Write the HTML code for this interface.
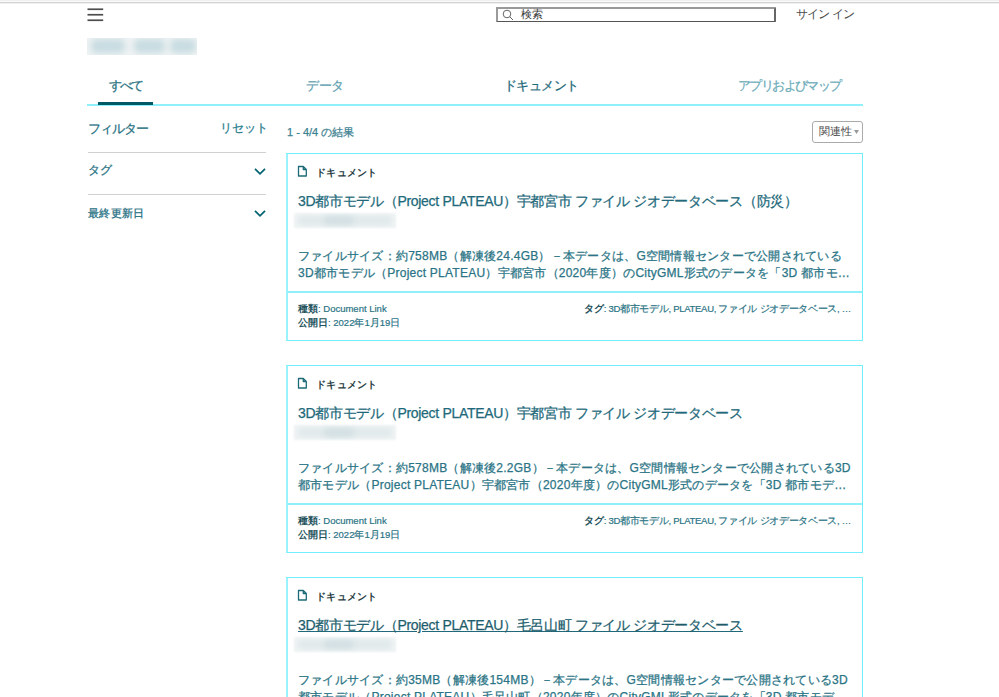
<!DOCTYPE html>
<html><head><meta charset="utf-8">
<style>
html,body{margin:0;padding:0;background:#fff;}
body{width:999px;height:697px;overflow:hidden;position:relative;font-family:"Liberation Sans",sans-serif;}
.a{position:absolute;white-space:nowrap;line-height:1;}
.s{-webkit-text-stroke-width:0.25px;}
.topl{position:absolute;left:0;width:999px;height:1px;}
.ham{position:absolute;left:88px;width:16px;height:2px;background:#4a4a4a;}
.blur{position:absolute;background:#eff3f4;overflow:hidden;}
.blob{position:absolute;background:#d3e1e5;border-radius:5px;filter:blur(2.5px);}
.tab{position:absolute;top:80px;font-size:12.5px;line-height:13px;}
.hr{position:absolute;left:88px;width:178px;height:1px;background:#d0d0d0;}
.chev{position:absolute;left:254px;width:12px;height:9px;}
.card{position:absolute;left:286px;width:574px;height:186px;border:1px solid #72eefc;border-left:2px solid #9af3fc;}
.card .ic{position:absolute;left:9px;top:11px;}
.card .kind{position:absolute;left:28px;top:14px;letter-spacing:0.3px;font-size:10px;font-weight:bold;color:#263c42;}
.card .title{position:absolute;left:10px;top:40px;font-size:14px;letter-spacing:-0.31px;color:#21697a;-webkit-text-stroke:0.25px #21697a;}
.card .sub{position:absolute;left:6px;top:59px;width:102px;height:15px;overflow:hidden;background:#eff3f4;filter:blur(0.8px);}
.card .desc{position:absolute;left:10px;top:94px;letter-spacing:0.24px;font-size:12px;line-height:17px;color:#2a7485;white-space:nowrap;-webkit-text-stroke:0.25px #2a7485;}
.card .div{position:absolute;left:0;top:137px;width:574px;height:2px;background:#8ff0fa;}
.card .f1{position:absolute;left:10px;top:148px;font-size:9.5px;line-height:13.5px;color:#2a7485;-webkit-text-stroke:0.2px #2a7485;}
.card .f1 b{color:#24535d;-webkit-text-stroke:0;}
.card .f2{position:absolute;right:11px;letter-spacing:-0.3px;top:148px;font-size:9.5px;line-height:13.5px;color:#2a7485;-webkit-text-stroke:0.2px #2a7485;}
.card .f2 b{color:#24535d;-webkit-text-stroke:0;}
</style></head>
<body>
<div class="topl" style="top:0;background:#f0f0f0"></div>
<div class="topl" style="top:1px;background:#fafafa"></div>
<div class="topl" style="top:2px;background:#d3d3d3"></div>
<div class="topl" style="top:3px;background:#efefef"></div>

<svg style="position:absolute;left:0;top:0" width="120" height="30"><g stroke="#4d4d4d" stroke-width="1.7"><line x1="87.5" y1="9.25" x2="103.2" y2="9.25"/><line x1="87.5" y1="14.75" x2="103.2" y2="14.75"/><line x1="87.5" y1="20.25" x2="103.2" y2="20.25"/></g></svg>

<div style="position:absolute;left:496px;top:7px;width:276px;height:12px;border:2px solid #9a9a9a;border-bottom:1px solid #555;border-right:2px solid #666;border-radius:1px;"></div>
<svg style="position:absolute;left:502px;top:9px" width="13" height="13" viewBox="0 0 13 13"><circle cx="5" cy="5" r="3.8" fill="none" stroke="#666" stroke-width="1"/><line x1="7.8" y1="7.8" x2="11" y2="11" stroke="#666" stroke-width="1"/></svg>
<div class="a" style="left:521px;top:9px;font-size:11px;color:#333">検索</div>
<div class="a" style="left:796px;top:9px;font-size:11.5px;letter-spacing:-0.8px;color:#4a4a4a">サイン イン</div>

<div class="blur" style="left:87px;top:38px;width:110px;height:17px;filter:blur(0.6px)">
  <div class="blob" style="left:4px;top:1px;width:34px;height:14px;background:#c8dce1;filter:blur(3px)"></div>
  <div class="blob" style="left:47px;top:1px;width:31px;height:14px;background:#c8dce1;filter:blur(3px)"></div>
  <div class="blob" style="left:83px;top:1px;width:26px;height:14px;background:#c8dce1;filter:blur(3px)"></div>
</div>

<div class="tab s" style="left:109px;letter-spacing:-2px;color:#2a7283">すべて</div>
<div class="tab s" style="left:306px;letter-spacing:-0.5px;color:#5fa2b0">データ</div>
<div class="tab s" style="left:504px;letter-spacing:-0.6px;color:#1f6a7b">ドキュメント</div>
<div class="tab s" style="left:738px;letter-spacing:-1.6px;color:#6dacb9">アプリおよびマップ</div>
<div style="position:absolute;left:87px;top:104px;width:776px;height:2px;background:#8ff0fa"></div>
<div style="position:absolute;left:98px;top:102px;width:55px;height:3px;background:#005a66"></div>

<div class="a s" style="left:88px;top:123px;font-size:12.5px;letter-spacing:-1px;color:#1f6f82">フィルター</div>
<div class="a s" style="left:219.5px;top:122px;font-size:12px;letter-spacing:0.3px;color:#2a7d8e">リセット</div>
<div class="hr" style="top:152px"></div>
<div class="a s" style="left:88px;top:164px;font-size:12px;color:#1f6f82">タグ</div>
<svg class="chev" style="top:167px" viewBox="0 0 12 9"><polyline points="1,1.8 6,6.8 11,1.8" fill="none" stroke="#00626f" stroke-width="1.7"/></svg>
<div class="hr" style="top:194px"></div>
<div class="a s" style="left:88px;top:208px;font-size:11px;letter-spacing:0.25px;color:#1f6f82">最終更新日</div>
<svg class="chev" style="top:209px" viewBox="0 0 12 9"><polyline points="1,1.8 6,6.8 11,1.8" fill="none" stroke="#00626f" stroke-width="1.7"/></svg>

<div class="a s" style="left:287px;top:127px;font-size:11px;color:#3c8191">1 - 4/4 の結果</div>
<div style="position:absolute;left:812px;top:121px;width:49px;height:20px;border:1px solid #aaa;border-radius:3px;"></div>
<div class="a" style="left:819px;top:126px;font-size:11px;color:#444">関連性</div>
<svg style="position:absolute;left:854px;top:130px" width="5" height="4" viewBox="0 0 5 4"><polygon points="0,0 5,0 2.5,4" fill="#999"/></svg>

<div class="card" style="top:153px"><svg class="ic" width="11" height="13" viewBox="0 0 11 13"><path d="M1.5 1.5 H6.3 L9.3 4.5 V11 H1.5 Z M6.3 1.5 V4.5 H9.3" fill="none" stroke="#1e6b78" stroke-width="1.3" stroke-linejoin="round"/></svg><div class="a kind">ドキュメント</div><div class="a title">3D都市モデル（Project PLATEAU）宇都宮市 ファイル ジオデータベース（防災）</div><div class="sub"><div class="blob" style="left:4px;top:3px;width:94px;height:9px;background:#e0e9eb"></div><div class="blob" style="left:30px;top:3px;width:30px;height:9px;background:#d3e0e3"></div></div><div class="desc">ファイルサイズ：約758MB（解凍後24.4GB）－本データは、G空間情報センターで公開されている<br>3D都市モデル（Project PLATEAU）宇都宮市（2020年度）のCityGML形式のデータを「3D 都市モ…</div><div class="div"></div><div class="f1"><b>種類</b>: Document Link<br><b>公開日</b>: 2022年1月19日</div><div class="f2"><b>タグ</b>: 3D都市モデル, PLATEAU, ファイル ジオデータベース, …</div></div>
<div class="card" style="top:365px"><svg class="ic" width="11" height="13" viewBox="0 0 11 13"><path d="M1.5 1.5 H6.3 L9.3 4.5 V11 H1.5 Z M6.3 1.5 V4.5 H9.3" fill="none" stroke="#1e6b78" stroke-width="1.3" stroke-linejoin="round"/></svg><div class="a kind">ドキュメント</div><div class="a title">3D都市モデル（Project PLATEAU）宇都宮市 ファイル ジオデータベース</div><div class="sub"><div class="blob" style="left:4px;top:3px;width:94px;height:9px;background:#e0e9eb"></div><div class="blob" style="left:30px;top:3px;width:30px;height:9px;background:#d3e0e3"></div></div><div class="desc">ファイルサイズ：約578MB（解凍後2.2GB）－本データは、G空間情報センターで公開されている3D<br>都市モデル（Project PLATEAU）宇都宮市（2020年度）のCityGML形式のデータを「3D 都市モデ…</div><div class="div"></div><div class="f1"><b>種類</b>: Document Link<br><b>公開日</b>: 2022年1月19日</div><div class="f2"><b>タグ</b>: 3D都市モデル, PLATEAU, ファイル ジオデータベース, …</div></div>
<div class="card" style="top:577px"><svg class="ic" width="11" height="13" viewBox="0 0 11 13"><path d="M1.5 1.5 H6.3 L9.3 4.5 V11 H1.5 Z M6.3 1.5 V4.5 H9.3" fill="none" stroke="#1e6b78" stroke-width="1.3" stroke-linejoin="round"/></svg><div class="a kind">ドキュメント</div><div class="a title" style="text-decoration:underline;color:#1f5a67">3D都市モデル（Project PLATEAU）毛呂山町 ファイル ジオデータベース</div><div class="sub"><div class="blob" style="left:4px;top:3px;width:94px;height:9px;background:#e0e9eb"></div><div class="blob" style="left:30px;top:3px;width:30px;height:9px;background:#d3e0e3"></div></div><div class="desc">ファイルサイズ：約35MB（解凍後154MB）－本データは、G空間情報センターで公開されている3D<br>都市モデル（Project PLATEAU）毛呂山町（2020年度）のCityGML形式のデータを「3D 都市モデ…</div><div class="div"></div><div class="f1"><b>種類</b>: Document Link<br><b>公開日</b>: 2022年1月19日</div><div class="f2"><b>タグ</b>: 3D都市モデル, PLATEAU, ファイル ジオデータベース, …</div></div>
</body></html>
